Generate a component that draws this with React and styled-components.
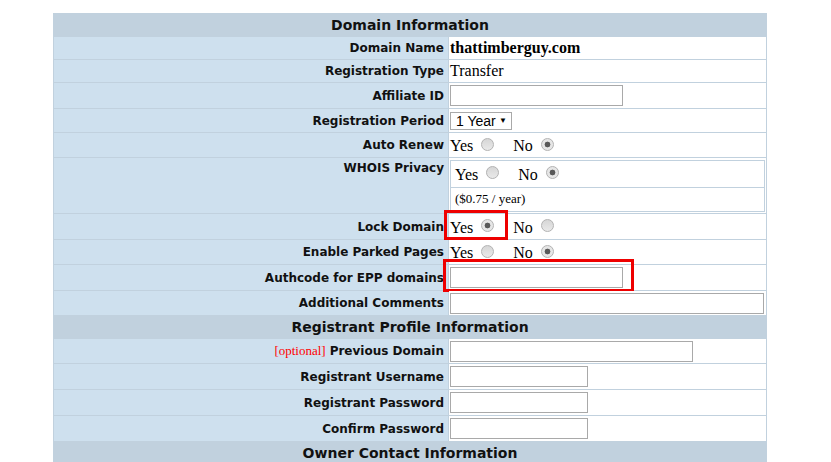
import React from "react";
import styled, { createGlobalStyle } from "styled-components";

const GlobalStyle = createGlobalStyle({
  "html, body": {
    margin: 0,
    padding: 0,
    background: "#ffffff",
  },
  body: {
    fontFamily: '"DejaVu Sans", Verdana, sans-serif',
  },
});

const Page = styled.div({
  padding: "13px 0 0 53px",
});

const Table = styled.table({
  width: "714px",
  borderCollapse: "separate",
  borderSpacing: "1px",
  background: "#c1d1de",
});

const HeaderCell = styled.th({
  height: "22px",
  padding: 0,
  background: "#c1d1de",
  color: "#111",
  fontFamily: '"DejaVu Sans", Verdana, sans-serif',
  fontWeight: "bold",
  fontSize: "14px",
  textAlign: "center",
  verticalAlign: "middle",
});

const LabelCell = styled.td(({ $top }) => ({
  width: "390px",
  padding: $top ? "3px 4px 0 0" : "0 4px 0 0",
  background: "#cee0ee",
  color: "#111",
  fontFamily: '"DejaVu Sans", Verdana, sans-serif',
  fontWeight: "bold",
  fontSize: "12px",
  textAlign: "right",
  verticalAlign: $top ? "top" : "middle",
  whiteSpace: "nowrap",
}));

const ValueCell = styled.td(({ $h }) => ({
  height: $h,
  padding: "0 1px",
  background: "#ffffff",
  color: "#000",
  fontFamily: '"Liberation Serif", "Times New Roman", serif',
  fontSize: "16px",
  verticalAlign: "middle",
  position: "relative",
}));

const Strong = styled.span({
  fontWeight: "bold",
});

const Optional = styled.span({
  color: "#f00",
  fontFamily: '"Liberation Serif", "Times New Roman", serif',
  fontWeight: "normal",
  fontSize: "13px",
  marginRight: "4px",
});

const TextInput = styled.input(({ $w }) => ({
  display: "block",
  width: $w,
  height: "21px",
  boxSizing: "border-box",
  margin: 0,
  padding: "1px 2px",
  border: "1px solid #a9a9a9",
  background: "#fff",
  fontSize: "13px",
}));

const Select = styled.div({
  display: "inline-flex",
  alignItems: "center",
  justifyContent: "space-between",
  whiteSpace: "nowrap",
  height: "18px",
  width: "62px",
  boxSizing: "border-box",
  padding: "0 4px 0 5px",
  border: "1px solid #a9a9a9",
  fontFamily: '"Liberation Sans", Arial, sans-serif',
  fontSize: "14px",
  lineHeight: "16px",
  color: "#000",
  verticalAlign: "middle",
});

const Caret = styled.span({
  fontSize: "8px",
  lineHeight: 1,
});

const RadioRow = styled.div({
  display: "flex",
  alignItems: "center",
  height: "20px",
});

const RadioText = styled.span({
  lineHeight: 1,
  paddingTop: "2px",
});

const Radio = styled.span(({ $checked, $after }) => ({
  display: "inline-block",
  width: "13px",
  height: "13px",
  boxSizing: "border-box",
  borderRadius: "50%",
  border: "1px solid #b3b3b3",
  background: $checked
    ? "radial-gradient(circle, #595959 0 2.6px, #e6e6e6 3.2px)"
    : "linear-gradient(#d6d6d6, #e9e9e9)",
  margin: `0 ${$after}px 0 8px`,
  transform: "translateY(-1px)",
}));

const Privacy = styled.table({
  width: "100%",
  borderCollapse: "collapse",
  margin: "1px 0",
  border: "1px solid #c1d1de",
});

const PrivacyCell = styled.td(({ $h, $small }) => ({
  height: $h,
  padding: "0 0 0 4px",
  borderBottom: "1px solid #c1d1de",
  fontFamily: '"Liberation Serif", "Times New Roman", serif',
  fontSize: $small ? "13px" : "16px",
  verticalAlign: "middle",
}));

const Highlight = styled.span(({ $l, $t, $w, $h }) => ({
  position: "absolute",
  left: $l,
  top: $t,
  width: $w,
  height: $h,
  boxSizing: "border-box",
  border: "3px solid #ee0000",
  pointerEvents: "none",
}));

function YesNo({ yes }) {
  return (
    <RadioRow>
      <RadioText>Yes</RadioText>
      <Radio $checked={yes} $after={19} />
      <RadioText>No</RadioText>
      <Radio $checked={!yes} $after={0} />
    </RadioRow>
  );
}

export default function App() {
  return (
    <>
      <GlobalStyle />
      <Page>
        <Table>
          <tbody>
            <tr>
              <HeaderCell colSpan={2}>Domain Information</HeaderCell>
            </tr>
            <tr>
              <LabelCell>Domain Name</LabelCell>
              <ValueCell $h="22px">
                <Strong>thattimberguy.com</Strong>
              </ValueCell>
            </tr>
            <tr>
              <LabelCell>Registration Type</LabelCell>
              <ValueCell $h="22px">Transfer</ValueCell>
            </tr>
            <tr>
              <LabelCell>Affiliate ID</LabelCell>
              <ValueCell $h="25px">
                <TextInput $w="173px" />
              </ValueCell>
            </tr>
            <tr>
              <LabelCell>Registration Period</LabelCell>
              <ValueCell $h="23px">
                <Select>
                  1 Year <Caret>▼</Caret>
                </Select>
              </ValueCell>
            </tr>
            <tr>
              <LabelCell>Auto Renew</LabelCell>
              <ValueCell $h="24px">
                <YesNo yes={false} />
              </ValueCell>
            </tr>
            <tr>
              <LabelCell $top>WHOIS Privacy</LabelCell>
              <ValueCell $h="55px">
                <Privacy>
                  <tbody>
                    <tr>
                      <PrivacyCell $h="26px">
                        <YesNo yes={false} />
                      </PrivacyCell>
                    </tr>
                    <tr>
                      <PrivacyCell $h="23px" $small>
                        ($0.75 / year)
                      </PrivacyCell>
                    </tr>
                  </tbody>
                </Privacy>
              </ValueCell>
            </tr>
            <tr>
              <LabelCell>Lock Domain</LabelCell>
              <ValueCell $h="25px">
                <YesNo yes />
                <Highlight $l="-5px" $t="-4px" $w="64px" $h="30px" />
              </ValueCell>
            </tr>
            <tr>
              <LabelCell>Enable Parked Pages</LabelCell>
              <ValueCell $h="24px">
                <YesNo yes={false} />
              </ValueCell>
            </tr>
            <tr>
              <LabelCell>Authcode for EPP domains</LabelCell>
              <ValueCell $h="25px">
                <TextInput $w="173px" />
                <Highlight $l="-6px" $t="-6px" $w="191px" $h="33px" />
              </ValueCell>
            </tr>
            <tr>
              <LabelCell>Additional Comments</LabelCell>
              <ValueCell $h="24px">
                <TextInput $w="314px" />
              </ValueCell>
            </tr>
            <tr>
              <HeaderCell colSpan={2}>Registrant Profile Information</HeaderCell>
            </tr>
            <tr>
              <LabelCell>
                <Optional>[optional]</Optional>Previous Domain
              </LabelCell>
              <ValueCell $h="24px">
                <TextInput $w="243px" />
              </ValueCell>
            </tr>
            <tr>
              <LabelCell>Registrant Username</LabelCell>
              <ValueCell $h="25px">
                <TextInput $w="138px" />
              </ValueCell>
            </tr>
            <tr>
              <LabelCell>Registrant Password</LabelCell>
              <ValueCell $h="25px">
                <TextInput $w="138px" />
              </ValueCell>
            </tr>
            <tr>
              <LabelCell>Confirm Password</LabelCell>
              <ValueCell $h="25px">
                <TextInput $w="138px" />
              </ValueCell>
            </tr>
            <tr>
              <HeaderCell colSpan={2}>Owner Contact Information</HeaderCell>
            </tr>
          </tbody>
        </Table>
      </Page>
    </>
  );
}
